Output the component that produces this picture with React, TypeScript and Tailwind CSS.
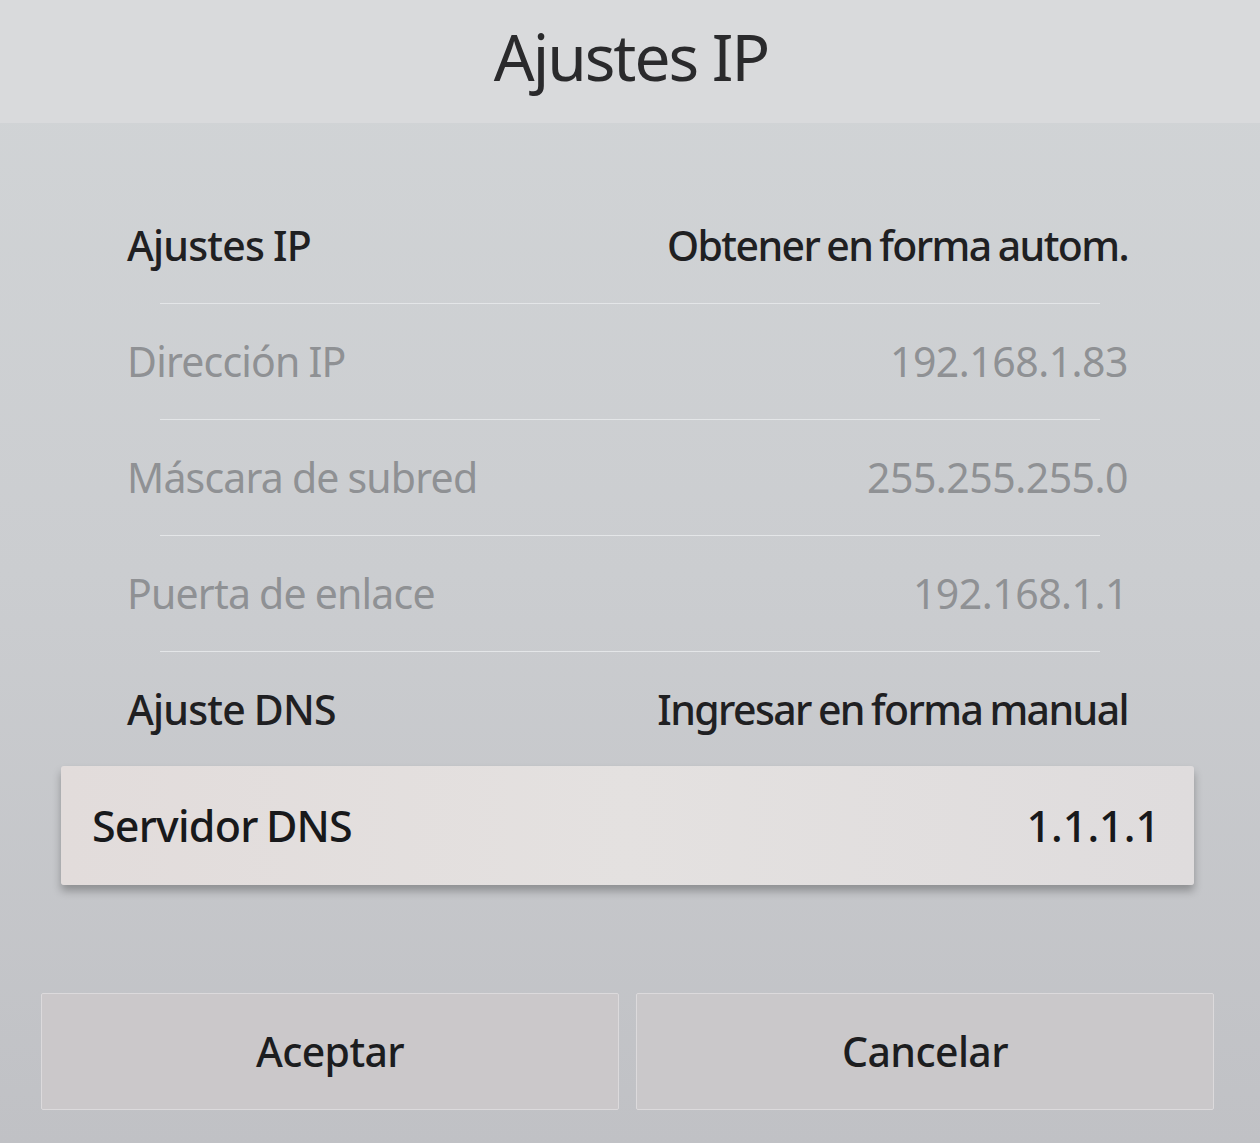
import React from "react";

const rows = [
  { label: "Ajustes IP", value: "Obtener en forma autom.", dim: false },
  { label: "Dirección IP", value: "192.168.1.83", dim: true },
  { label: "Máscara de subred", value: "255.255.255.0", dim: true },
  { label: "Puerta de enlace", value: "192.168.1.1", dim: true },
  { label: "Ajuste DNS", value: "Ingresar en forma manual", dim: false },
];

export default function App() {
  return (
    <div
      className="w-[1260px] h-[1143px] overflow-hidden flex flex-col bg-gradient-to-b from-[#d2d5d7] via-[#cbcdd0] to-[#c0c1c5]"
      style={{ fontFamily: '"Noto Sans", "Open Sans", sans-serif' }}
    >
      <div className="h-[123px] shrink-0 bg-[#d9dadc] flex items-center justify-center">
        <h1 className="text-[64px] leading-none text-[#2a2a2c] tracking-[-2px] mt-[-10px] pl-[2px]">Ajustes IP</h1>
      </div>
      <div className="pt-[65px] flex flex-col">
        {rows.map((r, i) => (
          <div key={i} className="flex flex-col">
            <div className="h-[115px] pl-[127px] pr-[132px] flex items-center justify-between">
              <span className={`text-[41px] leading-none tracking-[-0.8px] [word-spacing:-1px] ${r.dim ? "text-[#8f9194]" : "text-[#1f2022] font-medium"}`}>{r.label}</span>
              <span className={`text-[41px] leading-none ${r.dim ? "text-[#8f9194] tracking-[-0.5px]" : "text-[#1f2022] font-medium tracking-[-1.6px] [word-spacing:-2px]"}`}>{r.value}</span>
            </div>
            {i < 4 && <div className="h-[1px] mx-[160px] bg-[#e4e6e8]" />}
          </div>
        ))}
      </div>
      <div className="ml-[61px] mr-[66px] mt-[-1px] h-[119px] bg-gradient-to-r from-[#e2dcdb] via-[#e4e1e0] to-[#dfdcdd] rounded-[3px] shadow-[0_6px_8px_rgba(0,0,0,0.28)] pl-[31px] pr-[34px] flex items-center justify-between">
        <span className="text-[43px] leading-none text-[#18191b] font-medium tracking-[-0.8px] [word-spacing:-2px]">Servidor DNS</span>
        <span className="text-[43px] leading-none text-[#18191b] font-medium tracking-[0px]">1.1.1.1</span>
      </div>
      <div className="mt-[108px] px-[41px] flex gap-[17px]">
        <div className="w-[578px] h-[117px] bg-[#cbc8ca] border border-[#dcdadc] rounded-[2px] flex items-center justify-center">
          <span className="text-[41px] leading-none text-[#1c1d1f] font-medium tracking-[-0.6px]">Aceptar</span>
        </div>
        <div className="w-[578px] h-[117px] bg-[#cac8ca] border border-[#dcdadc] rounded-[2px] flex items-center justify-center">
          <span className="text-[41px] leading-none text-[#1c1d1f] font-medium tracking-[-0.6px]">Cancelar</span>
        </div>
      </div>
    </div>
  );
}
